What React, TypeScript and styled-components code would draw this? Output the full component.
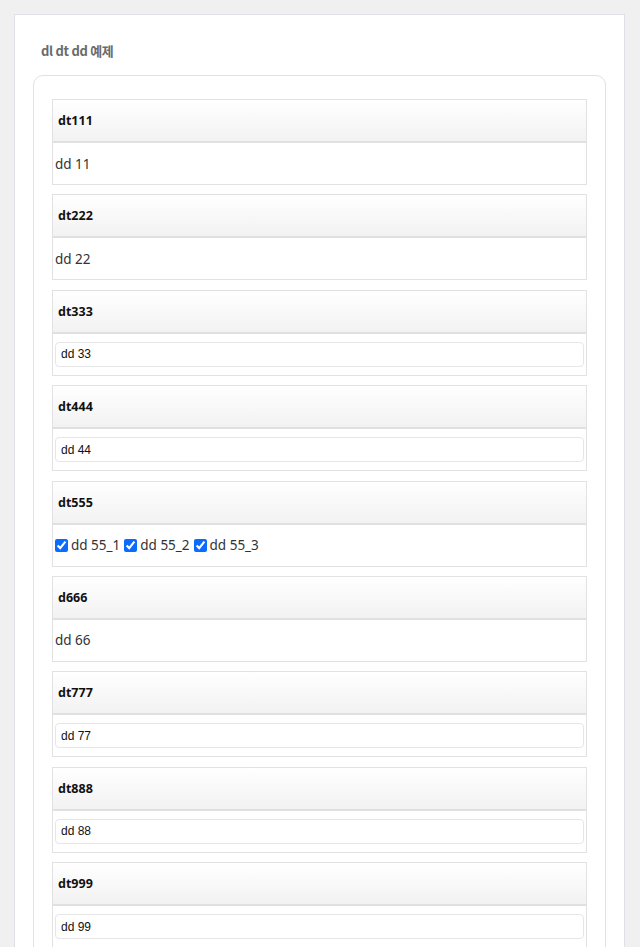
import * as React from "react";
import styled, { createGlobalStyle } from "styled-components";

const GlobalStyle = createGlobalStyle`
  html, body {
    margin: 0;
    padding: 0;
    background: #f0f0f0;
    font-family: "Noto Sans", "Noto Sans CJK KR", sans-serif;
  }
`;

const Page = styled.div`
  padding: 14px 15px 0 14px;
`;

const Panel = styled.section`
  background: #fff;
  border: 1px solid #e0e0e6;
  border-bottom: 0;
  padding: 27px 18px 20px 18px;
`;

const Title = styled.h2`
  margin: 0 0 16px 8px;
  font-family: "Noto Sans CJK KR", "Noto Sans", sans-serif;
  font-size: 13px;
  font-weight: 700;
  line-height: 17px;
  color: #6a6a6a;
  letter-spacing: -0.3px;
`;

const Card = styled.div`
  border: 1px solid #e2e2e2;
  border-radius: 10px;
  padding: 23px 18px 20px 18px;
`;

const List = styled.dl`
  margin: 0;
  display: flex;
  flex-direction: column;
`;

const Term = styled.dt`
  height: 41px;
  display: flex;
  align-items: center;
  padding: 0 5px;
  border: 1px solid #e2e2e2;
  border-bottom: 2px solid #e0e0e0;
  background: linear-gradient(#ffffff, #f2f2f2);
  font-size: 12.5px;
  font-weight: 700;
  color: #111;
`;

const Desc = styled.dd`
  margin: 0 0 9.375px 0;
  height: 41px;
  display: flex;
  align-items: center;
  gap: 4px;
  padding: 0 2px;
  border: 1px solid #e2e2e2;
  border-top: 0;
  font-size: 13.5px;
  color: #333;
`;

const TextBox = styled.input`
  flex: 1;
  height: 25px;
  box-sizing: border-box;
  border: 1px solid #e6e6e6;
  border-radius: 4px;
  padding: 0 5px;
  font-family: "Liberation Sans", Arial, sans-serif;
  font-size: 12px;
  color: #111;
  outline: none;
`;

const Check = styled.label`
  display: inline-flex;
  align-items: center;
  gap: 3px;

  input {
    margin: 0;
    width: 13px;
    height: 13px;
    accent-color: #0a6cff;
  }
`;

type Item = { term: string; kind: "text" | "input" | "checks"; value: string };

const items: Item[] = [
  { term: "dt111", kind: "text", value: "dd 11" },
  { term: "dt222", kind: "text", value: "dd 22" },
  { term: "dt333", kind: "input", value: "dd 33" },
  { term: "dt444", kind: "input", value: "dd 44" },
  { term: "dt555", kind: "checks", value: "dd 55" },
  { term: "d666", kind: "text", value: "dd 66" },
  { term: "dt777", kind: "input", value: "dd 77" },
  { term: "dt888", kind: "input", value: "dd 88" },
  { term: "dt999", kind: "input", value: "dd 99" },
];

export default function App() {
  return (
    <>
      <GlobalStyle />
      <Page>
        <Panel>
          <Title>dl dt dd 예제</Title>
          <Card>
            <List>
              {items.map(item => (
                <React.Fragment key={item.term}>
                  <Term>{item.term}</Term>
                  <Desc>
                    {item.kind === "text" && item.value}
                    {item.kind === "input" && (
                      <TextBox defaultValue={item.value} />
                    )}
                    {item.kind === "checks" &&
                      [1, 2, 3].map(n => (
                        <Check key={n}>
                          <input type="checkbox" defaultChecked />
                          {`${item.value}_${n}`}
                        </Check>
                      ))}
                  </Desc>
                </React.Fragment>
              ))}
            </List>
          </Card>
        </Panel>
      </Page>
    </>
  );
}
